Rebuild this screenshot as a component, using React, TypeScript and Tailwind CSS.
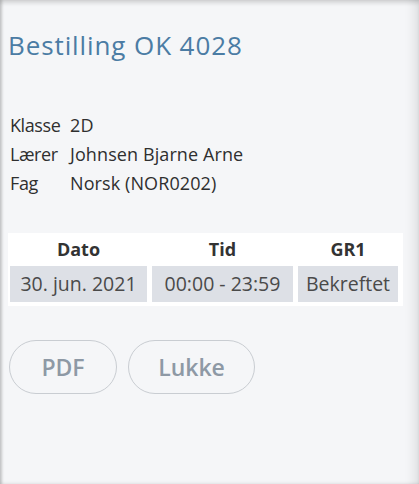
import React from 'react';

const rows = [
  { label: 'Klasse', value: '2D' },
  { label: 'Lærer', value: 'Johnsen Bjarne Arne' },
  { label: 'Fag', value: 'Norsk (NOR0202)' },
];

const App: React.FC = () => {
  return (
    <div
      className="h-[484px] w-[419px] bg-[#f5f6f8] font-['Open_Sans',sans-serif] shadow-[inset_0_4px_4px_-1px_rgba(0,0,0,0.14),inset_3px_0_3px_-1px_rgba(0,0,0,0.18),inset_-14px_0_10px_-8px_rgba(0,0,0,0.08),inset_0_-4px_4px_-3px_rgba(0,0,0,0.06)]"
    >
      <div className="pl-[8px] pt-[27px]">
        {/* Header */}
        <h1 className="text-[26px] leading-[36px] text-[#4b7ca4] tracking-[0.9px]">Bestilling OK 4028</h1>

        {/* Info */}
        <div className="mt-[48px] pl-[2px] flex flex-col text-[18px] leading-[29px] text-[#2f2f2f]">
          {rows.map((r) => (
            <div key={r.label} className="flex">
              <span className="w-[60px] shrink-0 whitespace-nowrap tracking-[-0.4px]">{r.label}</span>
              <span className="tracking-[0.1px]">{r.value}</span>
            </div>
          ))}
        </div>

        {/* Table */}
        <div className="mt-[35px] w-[395px] bg-white pl-[2px] pr-[5px] pb-[4px]">
          <div className="grid grid-cols-[137px_141px_100px] gap-x-[5px] text-[#333]">
            <div className="h-[33px] flex items-center justify-center font-bold text-[18px]">Dato</div>
            <div className="h-[33px] flex items-center justify-center font-bold text-[18px]">Tid</div>
            <div className="h-[33px] flex items-center justify-center font-bold text-[18px]">GR1</div>
            <div className="h-[36px] flex items-center justify-center bg-[#dde0e6] text-[19.5px] text-[#4a4a4a]">30. jun. 2021</div>
            <div className="h-[36px] flex items-center justify-center bg-[#dde0e6] text-[19.5px] text-[#4a4a4a]">00:00 - 23:59</div>
            <div className="h-[36px] flex items-center justify-center bg-[#dde0e6] text-[19.5px] text-[#4a4a4a]">Bekreftet</div>
          </div>
        </div>

        {/* Buttons */}
        <div className="mt-[34px] pl-[1px] flex gap-[11px]">
          <button className="h-[54px] w-[108px] rounded-full border border-[#c9cdd2] text-[23px] font-semibold text-[#8e99a5]">
            PDF
          </button>
          <button className="h-[54px] w-[127px] rounded-full border border-[#c9cdd2] text-[23px] font-semibold text-[#8e99a5]">
            Lukke
          </button>
        </div>
      </div>
    </div>
  );
};

export default App;
